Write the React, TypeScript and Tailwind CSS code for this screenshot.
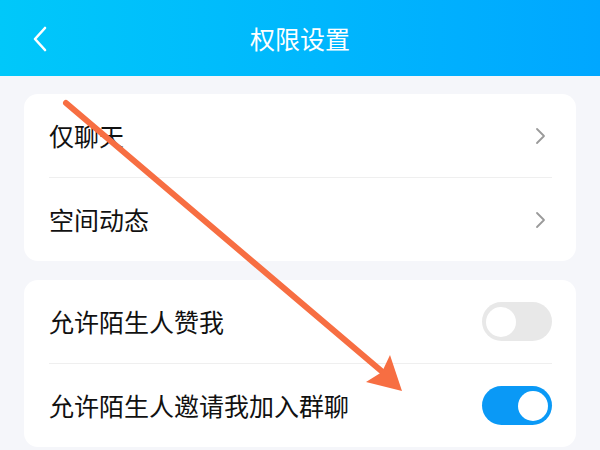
import React from 'react';

const FONT = '"Noto Sans CJK SC", "Noto Sans", sans-serif';

function Chevron() {
  return (
    <svg width="12" height="18" viewBox="0 0 12 18" className="shrink-0 mr-[6px]">
      <path d="M3 2 L10 9 L3 16" fill="none" stroke="#9a9a9a" strokeWidth="1.8" strokeLinecap="round" strokeLinejoin="round" />
    </svg>
  );
}

function Toggle({ on }: { on: boolean }) {
  return (
    <div
      className={`w-[70px] h-[39px] rounded-full flex items-center px-[4px] ${
        on ? 'bg-[#0a99f6] justify-end' : 'bg-[#e8e8e8] justify-start'
      }`}
    >
      <div className="w-[30px] h-[30px] rounded-full bg-white" />
    </div>
  );
}

function Row({ label, right }: { label: string; right: React.ReactNode }) {
  return (
    <div className="h-[83px] flex items-center justify-between">
      <span className="text-[25px] text-[#111] leading-none">{label}</span>
      {right}
    </div>
  );
}

export default function App() {
  return (
    <div className="relative w-[600px] h-[450px] overflow-hidden bg-[#f5f6fa]" style={{ fontFamily: FONT }}>
      {/* Header */}
      <header className="h-[76px] bg-gradient-to-r from-[#00c8fa] to-[#00a7ff] flex items-center relative">
        <svg width="20" height="28" viewBox="0 0 20 28" className="absolute left-[31px] top-[25px]">
          <path d="M14 3 L4 14 L14 25" fill="none" stroke="white" strokeWidth="2.6" strokeLinecap="round" strokeLinejoin="round" />
        </svg>
        <h1 className="w-full text-center text-white text-[25px] leading-none">权限设置</h1>
      </header>

      <main className="px-[24px] pt-[18px] flex flex-col gap-[19px]">
        <section className="bg-white rounded-[14px] pl-[25px] pr-[24px]">
          <Row label="仅聊天" right={<Chevron />} />
          <div className="h-px bg-[#efefef]" />
          <Row label="空间动态" right={<Chevron />} />
        </section>
        <section className="bg-white rounded-[14px] pl-[25px] pr-[24px]">
          <Row label="允许陌生人赞我" right={<Toggle on={false} />} />
          <div className="h-px bg-[#efefef]" />
          <Row label="允许陌生人邀请我加入群聊" right={<Toggle on />} />
        </section>
      </main>

      {/* Annotation arrow */}
      <svg width="600" height="450" className="absolute inset-0 pointer-events-none">
        <line x1="66" y1="103" x2="392" y2="380" stroke="#f76e42" strokeWidth="6" strokeLinecap="round" />
        <polygon points="402,391 390,355 382,372 366,382" fill="#f76e42" />
      </svg>
    </div>
  );
}
